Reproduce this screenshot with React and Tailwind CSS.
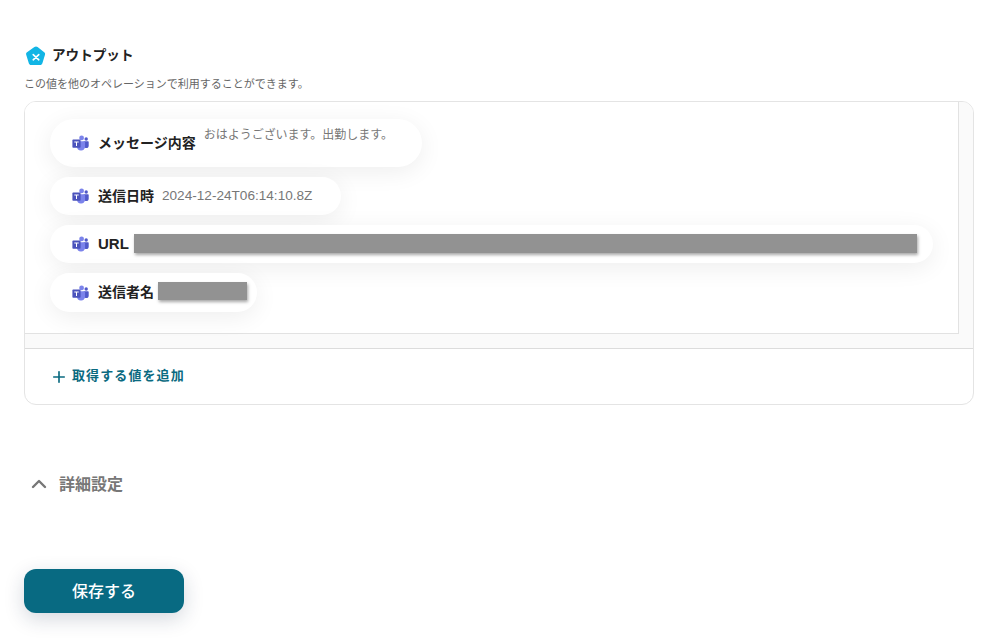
import React from 'react';
import { Plus, ChevronUp } from 'lucide-react';

const FONT = "font-['Liberation_Sans','Noto_Sans_CJK_JP',sans-serif]";

const TeamsIcon = () => (
  <svg width="17" height="16" viewBox="0 0 17 16" className="shrink-0">
    <circle cx="9.6" cy="2.9" r="2.4" fill="#7b83eb" />
    <circle cx="14.2" cy="4" r="1.7" fill="#5059c9" />
    <path d="M11.6 6.2h4.4c.4 0 .7.3.7.7v3.6a2.6 2.6 0 0 1-2.6 2.6h-.6l-1.9-1z" fill="#5059c9" />
    <path d="M5 6.2h7.4c.4 0 .7.3.7.7v4.7a3.9 3.9 0 0 1-4 3.9 4 4 0 0 1-4.1-3.9z" fill="#7b83eb" />
    <rect x="0.4" y="4.6" width="8.2" height="8.2" rx="0.8" fill="#4b53bc" />
    <path d="M2.3 6.6h4.4v.9H5v3.6H4v-3.6H2.3z" fill="#fff" />
  </svg>
);

const Pill = ({ label, labelClass = 'text-[14px]', className, children }) => (
  <div className={`flex items-center rounded-full bg-white pl-[22px] shadow-[0_5px_24px_rgba(0,0,0,0.07)] ${className}`}>
    <TeamsIcon />
    <span className={`ml-[9px] shrink-0 font-bold text-[#222] ${labelClass}`}>{label}</span>
    {children}
  </div>
);

const Redacted = ({ className }) => (
  <div className={`bg-[#929292] shadow-[1px_2px_3px_rgba(0,0,0,0.35)] ${className}`} />
);

export default function App() {
  return (
    <div className={`h-[638px] w-[1003px] overflow-hidden bg-white pl-[24px] pt-[46px] ${FONT}`}>
      <div className="flex h-[20px] items-center">
        <svg width="22" height="21" viewBox="0 0 22 21" className="ml-[1px]">
          <path d="M9.4 1 2 6.3c-.8.6-1.1 1.5-.8 2.4l2.7 8.7c.3.9 1.1 1.5 2 1.5h9.4c.9 0 1.7-.6 2-1.5l2.7-8.7c.3-.9 0-1.8-.8-2.4L12.6 1c-1-.7-2.2-.7-3.2 0z" fill="#12b5e5" />
          <path d="M8.2 8.6l5.6 5.2M13.8 8.6l-5.6 5.2" stroke="#fff" strokeWidth="1.6" strokeLinecap="round" />
        </svg>
        <span className="ml-[5px] text-[13.6px] font-bold text-[#222]">アウトプット</span>
      </div>
      <p className="mt-[9px] text-[11px] leading-[18px] text-[#666]">
        この値を他のオペレーションで利用することができます。
      </p>
      <div className="mt-[8px] h-[304px] w-[950px] overflow-hidden rounded-xl border border-[#e4e4e4] bg-white">
        <div className="h-[247px] border-b border-[#dcdcdc] bg-[#fafafa]">
          <div className="flex h-[232px]">
            <div className="h-full w-[934px] border-b border-r border-[#e2e2e2] bg-white pl-[25px] pt-[17px]">
              <div className="flex flex-col items-start gap-[10px]">
                <Pill label="メッセージ内容" className="h-[48px] w-[372px]">
                  <span className="mb-[17px] ml-[8px] text-[12px] tracking-[-0.02px] text-[#777]">おはようございます。出勤します。</span>
                </Pill>
                <Pill label="送信日時" className="h-[38px] w-[291px]">
                  <span className="ml-[8px] text-[13.6px] text-[#777]">2024-12-24T06:14:10.8Z</span>
                </Pill>
                <Pill label="URL" labelClass="text-[15px]" className="h-[38px] w-[883px]">
                  <Redacted className="ml-[5px] mt-[-1px] h-[19px] w-[783px]" />
                </Pill>
                <Pill label="送信者名" className="h-[39px] w-[207px]">
                  <Redacted className="ml-[4px] mt-[-3px] h-[18px] w-[89px]" />
                </Pill>
              </div>
            </div>
          </div>
        </div>
        <div className="flex h-[55px] items-center pl-[25px]">
          <Plus size={18} strokeWidth={2.2} className="text-[#0a6a80]" />
          <span className="ml-[4px] mt-[-1px] text-[13px] font-bold tracking-[1.1px] text-[#0a6a80]">取得する値を追加</span>
        </div>
      </div>
      <div className="mt-[66px] flex h-[26px] items-center pl-[3px]">
        <ChevronUp size={24} strokeWidth={2.4} className="text-[#777]" />
        <span className="ml-[8px] pt-[1px] text-[16px] font-bold text-[#777]">詳細設定</span>
      </div>
      <button className="mt-[72px] flex h-[44px] w-[160px] items-center justify-center rounded-xl bg-[#086a82] pt-[1px] text-[16px] font-medium text-white shadow-[0_6px_20px_rgba(20,40,70,0.18)]">
        保存する
      </button>
    </div>
  );
}
